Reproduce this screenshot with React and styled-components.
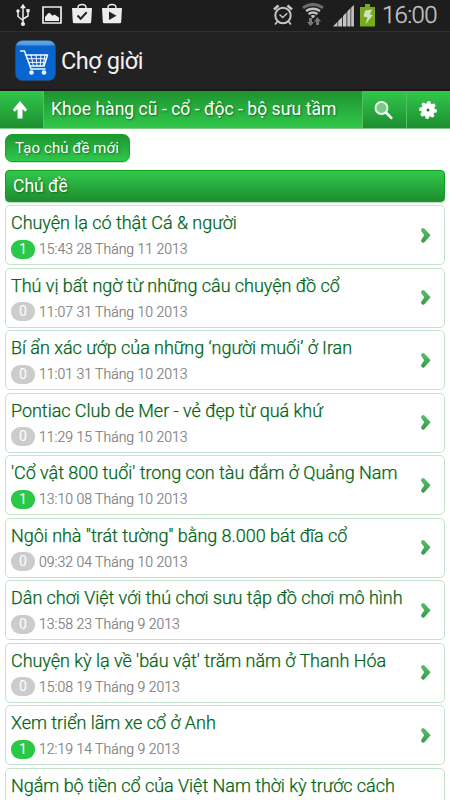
// App.jsx

import React from 'react';
import styled, { createGlobalStyle } from 'styled-components';

const GlobalStyle = createGlobalStyle`
  * {
    box-sizing: border-box;
  }

  body {
    margin: 0;
    background: #ffffff;
    font-family: Roboto, 'Noto Sans', sans-serif;
  }
`;

const Screen = styled.div`
  width: 450px;
  height: 800px;
  overflow: hidden;
  background: #ffffff;
`;

const StatusBar = styled.div`
  display: flex;
  justify-content: space-between;
  height: 31px;
  background: #1d1d1d;
`;

const StatusGroup = styled.div`
  display: flex;
  align-items: flex-start;
`;

const Clock = styled.span`
  width: 68px;
  margin-left: 7px;
  color: #c4c4c4;
  font-size: 24px;
  font-weight: 300;
  line-height: 30px;
  letter-spacing: -0.7px;
  white-space: nowrap;
  -webkit-text-stroke: 0.3px #c4c4c4;
`;

const TitleBar = styled.header`
  display: flex;
  align-items: center;
  height: 60px;
  padding: 0 0 0 15px;
  background: #222222;
  border-top: 1px solid #303030;
  border-bottom: 2px solid #1b1719;
`;

const AppTitle = styled.h1`
  margin: 0 0 0 5px;
  color: #f0f0f0;
  font-size: 23.5px;
  font-weight: 400;
  line-height: 30px;
  letter-spacing: -0.45px;
`;

const NavBar = styled.nav`
  display: flex;
  height: 38px;
  border-bottom: 1px solid #7fcb8a;
`;

const NavButton = styled.button`
  display: flex;
  align-items: center;
  justify-content: center;
  width: 44px;
  padding: ${(props) => (props.$divided ? '0 2px 0 0' : '0 4px 0 0')};
  border: none;
  border-left: ${(props) => (props.$divided ? '1px solid #55bf64' : 'none')};
  border-right: ${(props) => (props.$divided ? 'none' : '1px solid #55bf64')};
  background: linear-gradient(to bottom, #31c84b, #1d8e30);
`;

const NavTitle = styled.div`
  flex: 1;
  padding-left: 7px;
  background: linear-gradient(to bottom, #1d932f, #31c84b);
  color: #ffffff;
  font-size: 17.5px;
  line-height: 36px;
  letter-spacing: 0.04px;
  white-space: nowrap;
  text-shadow: 1px 1px 2px rgba(0, 50, 0, 0.55);
`;

const Content = styled.main`
  display: flex;
  flex-direction: column;
  align-items: flex-start;
  padding: 5px 5px 0;
`;

const NewTopicButton = styled.button`
  width: 125px;
  height: 28px;
  padding: 0 1px 1px 0;
  border: 1px solid #11a321;
  border-radius: 7px;
  background: linear-gradient(to bottom, #1d9630, #31c84b);
  color: #ffffff;
  font-family: inherit;
  font-size: 15px;
  line-height: 24px;
  letter-spacing: 0.08px;
  white-space: nowrap;
  text-shadow: 1px 1px 2px rgba(0, 50, 0, 0.5);
  box-shadow: 0 1px 0 #c8ecce;
`;

const SectionHeader = styled.h2`
  align-self: stretch;
  height: 32px;
  margin: 8px 0 3px;
  padding-left: 7px;
  border: 1px solid #0ea01d;
  border-radius: 4px;
  background: linear-gradient(to bottom, #31c84b, #1d8e30);
  color: #ffffff;
  font-size: 17.5px;
  font-weight: 400;
  line-height: 30px;
  text-shadow: 1px 1px 2px rgba(0, 50, 0, 0.5);
  box-shadow: 0 1px 0 #bde2c2;
`;

const TopicList = styled.ul`
  display: flex;
  flex-direction: column;
  gap: 2.5px;
  align-self: stretch;
  margin: 0;
  padding: 0;
  list-style: none;
`;

const TopicRow = styled.li`
  display: flex;
  align-items: center;
  justify-content: space-between;
  height: 60px;
  padding: 0 13px 0 5px;
  border: 1px solid #c5e3cc;
  border-radius: 5px;
  background: #ffffff;
`;

const TopicBody = styled.div`
  height: 100%;
`;

const TopicTitle = styled.div`
  height: 33px;
  color: #006515;
  font-size: 18px;
  font-weight: 300;
  line-height: 33px;
  letter-spacing: -0.03px;
  white-space: nowrap;
  -webkit-text-stroke: 0.25px #006515;
`;

const TopicMeta = styled.div`
  display: flex;
  align-items: center;
  height: 20px;
`;

const Badge = styled.span`
  width: 24px;
  height: 19px;
  margin-right: 4px;
  border-radius: 9px;
  background: ${(props) => (props.$active ? '#2bc848' : '#cccccc')};
  color: #ffffff;
  font-size: 14px;
  line-height: 19px;
  text-align: center;
`;

const TopicDate = styled.span`
  color: #7c7c7c;
  font-size: 14px;
  font-weight: 300;
  line-height: 20px;
  white-space: nowrap;
  -webkit-text-stroke: 0.2px #7c7c7c;
`;

const ICON = '#ededed';
const DIM = '#c4c4c4';

const UsbIcon = () => (
  <svg width="14" height="31" viewBox="0 0 14 31" fill="none" stroke={ICON} strokeWidth="1.500">
    <path d="M7 8v15M2 12v4.500l5 4M12 11v5l-5 3" />
    <path d="M7 3.800l3 4.400H4z" fill={ICON} stroke="none" />
    <circle cx="7" cy="24" r="2.100" fill={ICON} stroke="none" />
    <circle cx="2" cy="11" r="1.700" fill={ICON} stroke="none" />
    <path d="M10.400 9h3.200v3.200h-3.200z" fill={ICON} stroke="none" />
  </svg>
);

const PictureIcon = () => (
  <svg width="20" height="31" viewBox="0 0 20 31">
    <path d="M1 7h18v16H1z" fill="none" stroke={ICON} strokeWidth="1.700" />
    <path d="M3 21v-4l3-3.500 1.500-.8 3 3 2-1.200L17 17.500V21z" fill={ICON} />
  </svg>
);

const BagIcon = ({ children }) => (
  <svg width="20" height="31" viewBox="0 0 20 31">
    <path d="M6 9V7.500c0-4 8-4 8 0V9" fill="none" stroke={ICON} strokeWidth="1.400" />
    <path d="M0 8h20l-.8 14q-.1 1.300-1.500 1.300H2.300Q.9 23.300.8 22z" fill={ICON} />
    {children}
  </svg>
);

const AlarmIcon = () => (
  <svg width="20" height="31" viewBox="0 0 20 31" fill="none" stroke={DIM}>
    <circle cx="10" cy="15.500" r="7.700" strokeWidth="2" />
    <path d="M6.500 14.500l3.200 3 4.500-4.300" strokeWidth="1.500" />
    <path d="M1 9.500l4.500-4M19 9.500l-4.500-4" strokeWidth="2.700" />
    <path d="M4.500 21.500l-2.500 3M15.500 21.500l2.500 3" strokeWidth="1.800" />
  </svg>
);

const WifiIcon = () => (
  <svg width="22" height="31" viewBox="0 0 22 31" fill="none">
    <path d="M1 7.700Q11 1 21 7.700" stroke="#6c6c6c" strokeWidth="3" />
    <path d="M4 11q7-4.500 14 0M6.500 14q4.500-3 9 0" stroke={DIM} strokeWidth="2.400" />
    <path d="M8.500 15.700q2.500-1.500 5 0L11 18.500z" fill={DIM} />
    <path d="M7 18h3v4h2l-3.500 4.300L5 22h2zM14 25h3v-3.500h2L15.500 17 12 21.500h2z" fill="#777777" />
  </svg>
);

const SignalIcon = () => (
  <svg width="21" height="31" viewBox="0 0 21 31" fill={DIM}>
    <path d="M0 26.500l4.500-4.700v4.700zM5.200 21.100l4-4.200v9.600h-4zM10 16l3.500-3.700v14.200H10zM14.300 11.500l3.200-3.400v18.400h-3.200zM18.200 7.400l2.700-2.400v21.500h-2.700z" />
  </svg>
);

const BatteryIcon = () => (
  <svg width="15" height="31" viewBox="0 0 15 31">
    <path d="M5 4h5v3h5v19.500H0V7h5z" fill="#76ac18" />
    <path d="M5.200 10.500L12 9.500l-2.200 5 3 .5-7.200 9.200 1.900-7-4-.7z" fill="#d6dfc8" />
  </svg>
);

const CartLogo = () => (
  <svg width="41" height="41" viewBox="0 0 41 41">
    <defs>
      <linearGradient id="logoShine" x1="0" y1="0" x2="0" y2="1">
        <stop offset="0" stopColor="#5da5e8" />
        <stop offset="0.09" stopColor="#5b9fe4" />
        <stop offset="0.15" stopColor="#0964cc" />
        <stop offset="1" stopColor="#0766d2" />
      </linearGradient>
    </defs>
    <rect x="0.500" y="0.500" width="40" height="40" rx="7" fill="url(#logoShine)" stroke="#305273" strokeWidth="0.500" />
    <g fill="none" stroke="#f4f9ff" strokeWidth="1.500" strokeLinecap="round" strokeLinejoin="round">
      <path d="M5.500 11h4l6.500 18h14" />
      <path d="M10.500 15h22l-3.500 11H15" />
      <path d="M12 18.700h19.500M13.500 22.400h17M16 15l2.500 11M21 15l1 11M26 15l-.8 11M30 15l-2 11" strokeWidth="1" />
    </g>
    <circle cx="16.500" cy="32.500" r="2.300" fill="#f4f9ff" />
    <circle cx="29" cy="32.500" r="2.300" fill="#f4f9ff" />
  </svg>
);

const UpIcon = () => (
  <svg width="16" height="18" viewBox="0 0 16 18">
    <path d="M8 0l7 8.500q-.7 2.300-2.200 2l-2.300-2.600V17.500h-5V7.900l-2.300 2.600Q1.700 10.800 1 8.500z" fill="#ffffff" />
  </svg>
);

const SearchIcon = () => (
  <svg width="19" height="20" viewBox="0 0 19 20">
    <path d="M12 12.500l5.300 5.300" stroke="#ffffff" strokeWidth="2.600" strokeLinecap="round" />
    <circle cx="7.500" cy="8" r="6" fill="#7ac985" stroke="#edf9ee" strokeWidth="1.800" />
  </svg>
);

const teeth = [0, 45, 90, 135, 180, 225, 270, 315];

const GearIcon = () => (
  <svg width="18" height="18" viewBox="-9 -9 18 18">
    <circle r="6.700" fill="#ffffff" />
    {teeth.map((angle) => (
      <path key={angle} d="M-2.300-5.500l.6-3.300h3l1 3.300z" fill="#ffffff" transform={`rotate(${angle + 8})`} />
    ))}
    <circle r="1.500" fill="#168525" />
  </svg>
);

const Chevron = () => (
  <svg width="11" height="17" viewBox="0 0 11 17">
    <defs>
      <linearGradient id="chevronFill" x1="0" y1="0" x2="0" y2="1">
        <stop offset="0" stopColor="#5bbf6a" />
        <stop offset="1" stopColor="#349b49" />
      </linearGradient>
    </defs>
    <path d="M1.200 4Q.6 2.700 1.700 1.700 3.200.5 4.400 1.600L10.600 8.200 4.400 15.200Q3 16.300 1.700 15.100.6 14 1.300 12.800L4.200 8.200z" fill="url(#chevronFill)" />
  </svg>
);

const topics = [
  { title: 'Chuyện lạ có thật Cá & người', date: '15:43 28 Tháng 11 2013', replies: 1 },
  { title: 'Thú vị bất ngờ từ những câu chuyện đồ cổ', date: '11:07 31 Tháng 10 2013', replies: 0 },
  { title: 'Bí ẩn xác ướp của những ‘người muối’ ở Iran', date: '11:01 31 Tháng 10 2013', replies: 0 },
  { title: 'Pontiac Club de Mer - vẻ đẹp từ quá khứ', date: '11:29 15 Tháng 10 2013', replies: 0 },
  { title: "'Cổ vật 800 tuổi' trong con tàu đắm ở Quảng Nam", date: '13:10 08 Tháng 10 2013', replies: 1 },
  { title: 'Ngôi nhà "trát tường" bằng 8.000 bát đĩa cổ', date: '09:32 04 Tháng 10 2013', replies: 0 },
  { title: 'Dân chơi Việt với thú chơi sưu tập đồ chơi mô hình', date: '13:58 23 Tháng 9 2013', replies: 0 },
  { title: "Chuyện kỳ lạ về 'báu vật' trăm năm ở Thanh Hóa", date: '15:08 19 Tháng 9 2013', replies: 0 },
  { title: 'Xem triển lãm xe cổ ở Anh', date: '12:19 14 Tháng 9 2013', replies: 1 },
  { title: 'Ngắm bộ tiền cổ của Việt Nam thời kỳ trước cách' },
];

const LeftIcons = styled(StatusGroup)`
  gap: 10px;
  padding-left: 16px;

  svg:first-child {
    margin-right: 2px;
  }
`;

const RightIcons = styled(StatusGroup)`
  svg {
    margin-right: 6px;
  }

  svg:first-child,
  svg:nth-child(2) {
    margin-right: 9px;
  }

  svg:nth-child(4) {
    margin-right: 0;
  }
`;

const App = () => {
  return (
    <Screen>
      <GlobalStyle />
      <StatusBar>
        <LeftIcons>
          <UsbIcon />
          <PictureIcon />
          <BagIcon>
            <path d="M5.500 15.500l3.200 3.200 6-6.500" fill="none" stroke="#222222" strokeWidth="2" />
          </BagIcon>
          <BagIcon>
            <path d="M7 11.500l7.500 4.200L7 20z" fill="#222222" />
          </BagIcon>
        </LeftIcons>
        <RightIcons>
          <AlarmIcon />
          <WifiIcon />
          <SignalIcon />
          <BatteryIcon />
          <Clock>16:00</Clock>
        </RightIcons>
      </StatusBar>
      <TitleBar>
        <CartLogo />
        <AppTitle>Chợ giời</AppTitle>
      </TitleBar>
      <NavBar>
        <NavButton aria-label="Up">
          <UpIcon />
        </NavButton>
        <NavTitle>Khoe hàng cũ - cổ - độc - bộ sưu tầm</NavTitle>
        <NavButton $divided aria-label="Search">
          <SearchIcon />
        </NavButton>
        <NavButton $divided aria-label="Settings">
          <GearIcon />
        </NavButton>
      </NavBar>
      <Content>
        <NewTopicButton>Tạo chủ đề mới</NewTopicButton>
        <SectionHeader>Chủ đề</SectionHeader>
        <TopicList>
          {topics.map((topic) => (
            <TopicRow key={topic.title}>
              <TopicBody>
                <TopicTitle>{topic.title}</TopicTitle>
                {topic.date && (
                  <TopicMeta>
                    <Badge $active={topic.replies > 0}>{topic.replies}</Badge>
                    <TopicDate>{topic.date}</TopicDate>
                  </TopicMeta>
                )}
              </TopicBody>
              {topic.date && <Chevron />}
            </TopicRow>
          ))}
        </TopicList>
      </Content>
    </Screen>
  );
};

export default App;
